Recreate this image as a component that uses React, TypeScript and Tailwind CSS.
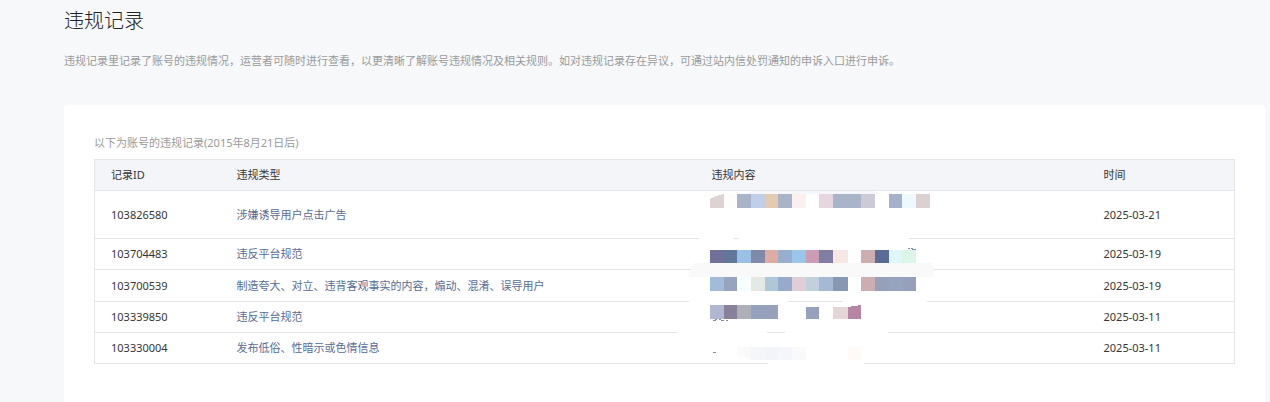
interface ViolationRecord {
  id: string;
  type: string;
  date: string;
  rowClass: string;
}

const records: ViolationRecord[] = [
  { id: "103826580", type: "涉嫌诱导用户点击广告", date: "2025-03-21", rowClass: "h-[48px]" },
  { id: "103704483", type: "违反平台规范", date: "2025-03-19", rowClass: "h-[31px]" },
  {
    id: "103700539",
    type: "制造夸大、对立、违背客观事实的内容，煽动、混淆、误导用户",
    date: "2025-03-19",
    rowClass: "h-[32px]",
  },
  { id: "103339850", type: "违反平台规范", date: "2025-03-11", rowClass: "h-[31px]" },
  { id: "103330004", type: "发布低俗、性暗示或色情信息", date: "2025-03-11", rowClass: "h-[31px]" },
];

// x edges of the mosaic columns
const edges = [40, 54, 67, 81, 95, 108, 122, 136, 149, 163, 178, 191, 205, 219, 232, 246, 260];

const mosaic = [
  {
    y: 34,
    height: 14,
    colors: ["#ded3d3", "#fffdfb", "#a9b4c9", "#bfcfe7", "#e4cbb0", "#a9b4c9", "#fbf0ef", "", "#e5d6df", "#a9b4c9", "#a9b4c9", "#cccad6", "", "#a5b0cb", "#edf8ff", "#ddd0d3"],
  },
  {
    y: 90,
    height: 13,
    colors: ["#707098", "#61779a", "#9ac1e5", "#7f8aab", "#dfaca3", "#97aecd", "#9bc6eb", "#cc9cb3", "#7f7ea3", "#f7e7e2", "", "#ccadb2", "#5a6c96", "#dff7fc", "#ddf4e9"],
  },
  {
    y: 117,
    height: 14,
    colors: ["#9fbdd9", "#97a4c0", "#f7ffff", "#e3eae5", "#b0c7d8", "#97aacc", "#e0cdd5", "#c0d0dc", "#a6b9d3", "#8898b2", "#fdffff", "#ccadb2", "#96a0b8", "#97a2bc", "#96a0bb"],
  },
  {
    y: 145,
    height: 14,
    colors: ["#b0b7d2", "#888199", "#adb0b9", "#96a1bd", "#96a1bd"],
  },
];

const ContentMosaic = () => {
  return (
    <svg
      className="absolute right-[285px] top-px pointer-events-none"
      width="280"
      height="210"
      viewBox="0 0 280 210"
      shapeRendering="crispEdges"
      aria-hidden="true"
    >
      {/* wiped strokes over the row lines */}
      <g fill="#fff">
        <rect x="29" y="76" width="35" height="5" />
        <rect x="68" y="76" width="171" height="5" />
        <rect x="19" y="139" width="99" height="5" />
        <rect x="173" y="139" width="84" height="5" />
        <rect x="7" y="170" width="90" height="5" />
        <rect x="115" y="170" width="103" height="5" />
        <rect x="98" y="201" width="96" height="5" />
      </g>
      <path d="M80 32 L86 31 H202 L210 33 V34 H74 Z" fill="#f6f7fa" />
      {mosaic.map((row) =>
        row.colors.map(
          (color, i) =>
            color && (
              <rect
                key={`${row.y}-${i}`}
                x={edges[i]}
                y={row.y}
                width={edges[i + 1] - edges[i]}
                height={row.height}
                fill={color}
              />
            )
        )
      )}
      <path d="M40 34 H54 L46 36 L40 39 Z" fill="#fff" />
      <path d="M24 103 H262 L264 109 V117 H19 V113 Z" fill="#f9f9f9" />
      <rect x="136" y="147" width="13" height="12" fill="#96a1bd" />
      <rect x="163" y="147" width="15" height="12" fill="#e4d6d6" />
      <path d="M178 147 L191 145 V159 H178 Z" fill="#b585a2" />
      <path d="M67 187 H81 V199 L67 196 Z" fill="#fafafb" />
      <rect x="81" y="187" width="14" height="13" fill="#f5f6f9" />
      <rect x="95" y="187" width="13" height="13" fill="#f2f4f9" />
      <rect x="108" y="187" width="14" height="13" fill="#f4f6fb" />
      <rect x="122" y="187" width="14" height="13" fill="#fafafb" />
      <rect x="178" y="187" width="13" height="13" fill="#fff9f8" />
      {/* leftovers of the wiped text */}
      <g fill="#7f8fae">
        <rect x="238" y="88" width="2" height="1" />
        <rect x="241" y="88" width="2" height="1" />
        <rect x="242" y="89" width="4" height="1" />
        <rect x="43" y="160" width="3" height="1" />
        <rect x="45" y="159" width="2" height="1" />
        <rect x="49" y="159" width="2" height="1" />
        <rect x="51" y="160" width="3" height="1" />
        <rect x="56" y="160" width="2" height="1" />
        <rect x="43" y="192" width="3" height="1" />
      </g>
    </svg>
  );
};

const App = () => {
  return (
    <div className="min-h-screen flex flex-col bg-[#f6f8fa] pl-16 pr-[5px] text-[11px] leading-4 text-[#353535] font-['Noto_Sans','Noto_Sans_CJK_SC',sans-serif]">
      <header className="pt-[7px]">
        <h1 className="text-[20px] leading-7 font-light text-[#222]">违规记录</h1>
        <p className="mt-[18px] text-[#9a9a9a]">
          违规记录里记录了账号的违规情况，运营者可随时进行查看，以更清晰了解账号违规情况及相关规则。如对违规记录存在异议，可通过站内信处罚通知的申诉入口进行申诉。
        </p>
      </header>
      <main className="mt-9 flex-1 rounded-t-sm bg-white px-[30px] pt-[30px] pb-8">
        <p className="text-[#9a9a9a]">以下为账号的违规记录(2015年8月21日后)</p>
        <div className="relative mt-2">
          <table className="w-full table-fixed border-collapse border border-[#e4e5ea] text-left">
            <colgroup>
              <col className="w-[126px]" />
              <col />
              <col className="w-[392px]" />
              <col className="w-[147px]" />
            </colgroup>
            <thead>
              <tr className="h-[31px] bg-[#f4f5f9]">
                <th className="pl-4 font-normal">记录ID</th>
                <th className="pl-4 font-normal">违规类型</th>
                <th className="pl-4 font-normal">违规内容</th>
                <th className="pl-4 font-normal">时间</th>
              </tr>
            </thead>
            <tbody>
              {records.map((record) => (
                <tr key={record.id} className={`border-t border-[#e4e5ea] ${record.rowClass}`}>
                  <td className="pl-4">{record.id}</td>
                  <td className="pl-4">
                    <a href="#" className="text-[#576b95]">
                      {record.type}
                    </a>
                  </td>
                  <td className="pl-4" />
                  <td className="pl-4">{record.date}</td>
                </tr>
              ))}
            </tbody>
          </table>
          <ContentMosaic />
        </div>
      </main>
    </div>
  );
};

export default App;
